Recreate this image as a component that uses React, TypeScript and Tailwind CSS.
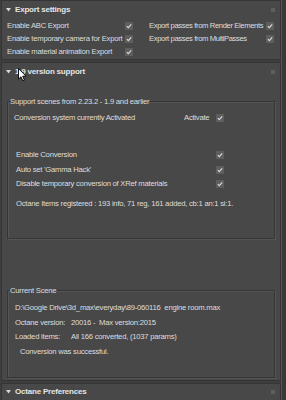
import React from "react";

const font = { fontFamily: '"Liberation Sans", Arial, sans-serif' };

function Check() {
  return (
    <span className="inline-flex h-[8px] w-[8px] shrink-0 items-center justify-center bg-[#5e5e5e]">
      <svg width="6" height="6" viewBox="0 0 6 6">
        <path d="M0.8 3.2 L2.3 4.7 L5.2 1.3" stroke="#dcdcdc" strokeWidth="1.1" fill="none" />
      </svg>
    </span>
  );
}

function Header({ title, h = "h-[18px]" }: { title: string; h?: string }) {
  return (
    <div className={`flex ${h} shrink-0 items-center pl-[4px] pr-[5px]`}>
      <svg width="5" height="4" viewBox="0 0 5 4" className="mr-[4px]">
        <path d="M0 0 L5 0 L2.5 3.5 Z" fill="#d8d8d8" />
      </svg>
      <span className="text-[8px] font-bold leading-none tracking-[-0.2px] text-[#e4e4e4]">{title}</span>
      <span className="ml-auto h-[4px] w-[4px] bg-[#5e5e5e]" />
    </div>
  );
}

function Row({ label, w = "w-[118px]", t = "" }: { label: string; w?: string; t?: string }) {
  return (
    <div className="flex h-[13px] items-center">
      <span className={`${w} ${t} whitespace-nowrap`}>{label}</span>
      <Check />
    </div>
  );
}

export default function App() {
  return (
    <div
      className="relative flex h-[400px] w-[286px] overflow-hidden bg-[#3e3e3e] text-[7.7px] tracking-[-0.25px] text-[#dedede]"
      style={font}
    >
      <div className="flex w-[281px] shrink-0 flex-col pl-[1px]">
        {/* Export settings */}
        <div className="flex h-[60px] shrink-0 flex-col border border-[#353535] bg-[#484848]">
          <Header title="Export settings" />
          <div className="flex pl-[5px]">
            <div className="flex w-[142px] flex-col">
              <Row label="Enable ABC Export" />
              <Row label="Enable temporary camera for Export" />
              <Row label="Enable material animation Export" />
            </div>
            <div className="flex flex-col">
              <Row label="Export passes from Render Elements" w="w-[117px]" t="tracking-[-0.4px]" />
              <Row label="Export passes from MultiPasses" w="w-[117px]" t="tracking-[-0.4px]" />
            </div>
          </div>
        </div>

        {/* 1.9 version support */}
        <div className="mt-[2px] flex h-[319px] shrink-0 flex-col border border-[#353535] bg-[#484848]">
          <Header title="1.9 version support" />
          <div className="mx-[5px] mt-[20px] flex h-[138px] shrink-0 flex-col border border-[#363636] shadow-[inset_1px_1px_0_#555,1px_1px_0_#555]">
            <div className="relative">
              <span className="absolute left-[2px] top-[-6px] whitespace-nowrap bg-[#484848] pr-[1px] leading-[11px]">
                Support scenes from 2.23.2 - 1.9 and earlier
              </span>
            </div>
            <div className="mt-[9px] flex h-[13px] items-center pl-[6px]">
              <span className="w-[170px] whitespace-nowrap">Conversion system currently Activated</span>
              <span className="w-[32px] whitespace-nowrap">Activate</span>
              <Check />
            </div>
            <div className="mt-[24px] flex flex-col pl-[8px]">
              {["Enable Conversion", "Auto set 'Gamma Hack'", "Disable temporary conversion of XRef materials"].map((t) => (
                <div key={t} className="flex h-[14.5px] items-center">
                  <span className="w-[200px] whitespace-nowrap">{t}</span>
                  <Check />
                </div>
              ))}
            </div>
            <div className="mt-[6px] flex h-[13px] items-center whitespace-nowrap pl-[8px]">
              Octane Items registered : 193 info, 71 reg, 161 added, cb:1 an:1 si:1.
            </div>
          </div>

          <div className="mx-[5px] mt-[51px] flex h-[88px] shrink-0 flex-col border border-[#363636] shadow-[inset_1px_1px_0_#555,1px_1px_0_#555]">
            <div className="relative">
              <span className="absolute left-[2px] top-[-6px] whitespace-nowrap bg-[#484848] pr-[1px] leading-[11px]">
                Current Scene
              </span>
            </div>
            <div className="mt-[10px] flex flex-col pl-[7px]">
              <div className="flex h-[14.5px] items-center whitespace-nowrap">
                D:\Google Drive\3d_max\everyday\89-060116&nbsp;&nbsp;engine room.max
              </div>
              <div className="flex h-[14.5px] items-center whitespace-nowrap">
                <span className="w-[56px]">Octane version:</span>
                <span>20016 -&nbsp;&nbsp;Max version:2015</span>
              </div>
              <div className="flex h-[14.5px] items-center whitespace-nowrap">
                <span className="w-[56px]">Loaded items:</span>
                <span>All 166 converted, (1037 params)</span>
              </div>
              <div className="flex h-[14.5px] items-center whitespace-nowrap pl-[5px]">
                Conversion was successful.
              </div>
            </div>
          </div>
        </div>

        {/* Octane Preferences */}
        <div className="mt-[2px] flex h-[30px] shrink-0 flex-col border border-[#353535] bg-[#484848]">
          <Header title="Octane Preferences" h="h-[16px]" />
        </div>
      </div>
      <div className="w-[5px] shrink-0 border-l border-[#555] bg-[#393939]" />

      {/* mouse cursor */}
      <svg className="absolute left-[18px] top-[68px]" width="9" height="14" viewBox="0 0 9 14">
        <path d="M0.5 0.5 L0.5 11 L3 8.8 L4.8 12.8 L6.4 12.1 L4.7 8.2 L8 8.2 Z" fill="#fff" stroke="#000" strokeWidth="0.9" />
      </svg>
    </div>
  );
}
